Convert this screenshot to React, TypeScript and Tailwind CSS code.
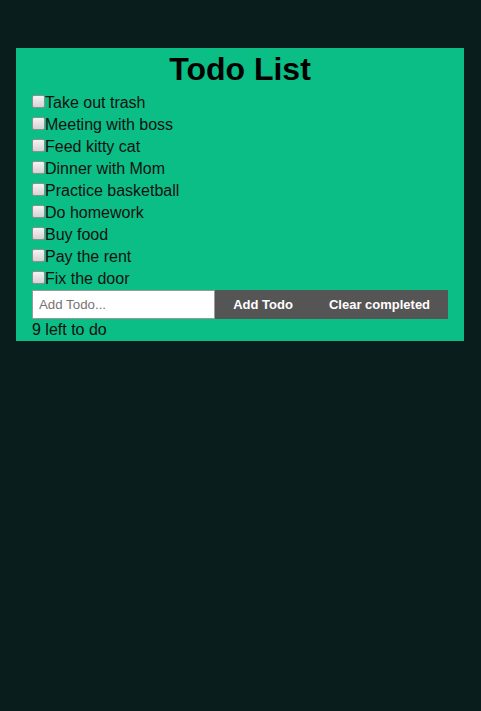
import { useState } from "react";

const initial = [
  "Take out trash",
  "Meeting with boss",
  "Feed kitty cat",
  "Dinner with Mom",
  "Practice basketball",
  "Do homework",
  "Buy food",
  "Pay the rent",
  "Fix the door",
];

export default function App() {
  const [todos, setTodos] = useState(initial.map((text) => ({ text, done: false })));
  const [draft, setDraft] = useState("");

  const left = todos.filter((t) => !t.done).length;

  return (
    <div className="min-h-[711px] bg-[#0a1d1d] pt-[48px] px-4 font-['Liberation_Sans',Arial,sans-serif]">
      <div className="w-[448px] bg-[#0bbe85] px-4 text-[#111]">
        <h1 className="h-[43px] flex items-center justify-center text-[32px] leading-[37px] font-bold text-black">
          Todo List
        </h1>
        <ul>
          {todos.map((t, i) => (
            <li key={i} className="h-[22px] flex items-center text-[16px] leading-[22px] pt-[1px]">
              <button
                type="button"
                onClick={() => setTodos(todos.map((x, j) => (j === i ? { ...x, done: !x.done } : x)))}
                className="w-[13px] h-[13px] -mt-[3px] border border-[#8f8f8f] rounded-[2px] bg-gradient-to-b from-[#f4f4f4] to-[#d4d4d4] flex items-center justify-center text-[10px] leading-none"
              >
                {t.done ? "✓" : ""}
              </button>
              <span className={t.done ? "line-through" : ""}>{t.text}</span>
            </li>
          ))}
        </ul>
        <div className="flex h-[29px] mt-[1px]">
          <input
            value={draft}
            onChange={(e) => setDraft(e.target.value)}
            placeholder="Add Todo..."
            className="w-[183px] h-full border border-[#9a9a9a] bg-white px-[6px] text-[13.3px] text-[#333] placeholder:text-[#757575] outline-none"
          />
          <button
            type="button"
            onClick={() => {
              if (!draft.trim()) return;
              setTodos([...todos, { text: draft, done: false }]);
              setDraft("");
            }}
            className="w-[96px] h-full bg-[#555555] text-white text-[13px] font-bold"
          >
            Add Todo
          </button>
          <button
            type="button"
            onClick={() => setTodos(todos.filter((t) => !t.done))}
            className="flex-1 h-full bg-[#555555] text-white text-[13px] font-bold"
          >
            Clear completed
          </button>
        </div>
        <div className="h-[22px] flex items-center text-[16px] leading-[22px]">{left} left to do</div>
      </div>
    </div>
  );
}
